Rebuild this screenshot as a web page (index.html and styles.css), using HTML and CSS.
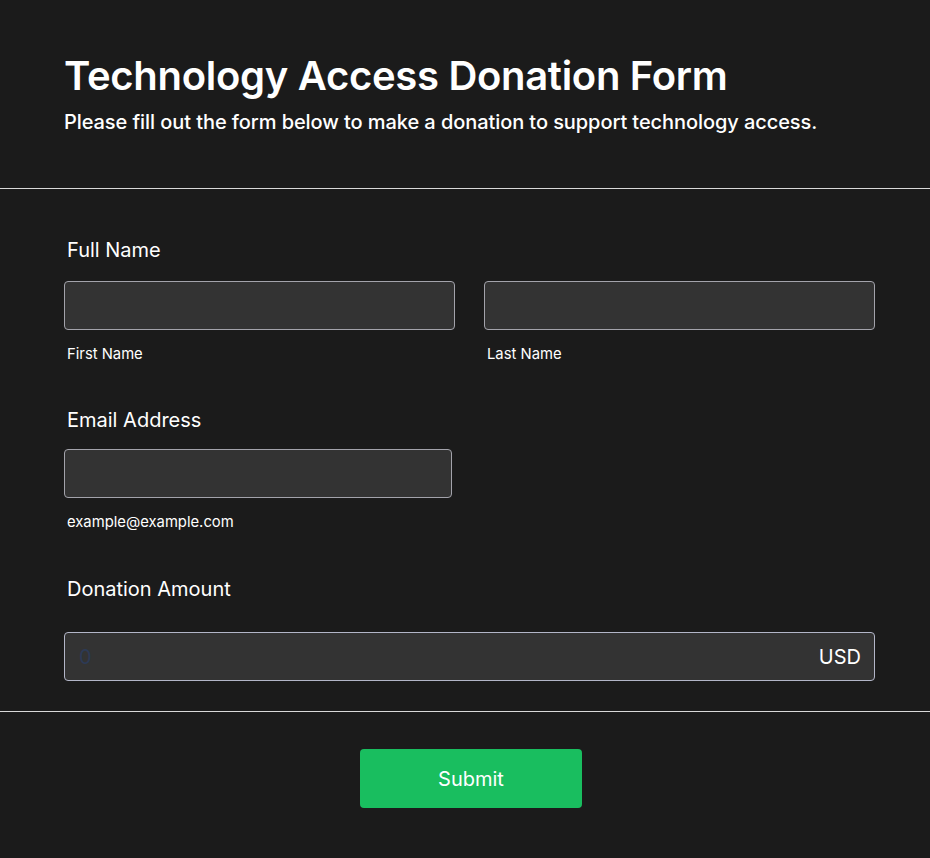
FILE: index.html
```html
<!DOCTYPE html>
<html lang="en">
<head>
<meta charset="utf-8">
<title>Technology Access Donation Form</title>
<link rel="stylesheet" href="styles.css">
</head>
<body>
<form class="form">
  <header class="header">
    <h1 class="title">Technology Access Donation Form</h1>
    <p class="subtitle">Please fill out the form below to make a donation to support technology access.</p>
  </header>
  <section class="fields">
    <div class="field field-name">
      <label class="label">Full Name</label>
      <div class="row">
        <div class="col">
          <input class="input" type="text">
          <span class="sublabel">First Name</span>
        </div>
        <div class="col">
          <input class="input" type="text">
          <span class="sublabel">Last Name</span>
        </div>
      </div>
    </div>
    <div class="field field-email">
      <label class="label">Email Address</label>
      <input class="input input-email" type="email">
      <span class="sublabel">example@example.com</span>
    </div>
    <div class="field field-amount">
      <label class="label">Donation Amount</label>
      <div class="amount">
        <span class="amount-value">0</span>
        <span class="amount-currency">USD</span>
      </div>
    </div>
  </section>
  <footer class="footer">
    <button class="submit" type="button">Submit</button>
  </footer>
</form>
</body>
</html>
```
FILE: styles.css
```css
* { box-sizing: border-box; }
html, body { margin: 0; padding: 0; }
body {
  background: #1b1b1b;
  color: #ffffff;
  font-family: Inter, "Noto Sans", "Liberation Sans", sans-serif;
  width: 930px;
  height: 858px;
  overflow: hidden;
}
.form { display: flex; flex-direction: column; }
.header {
  padding: 52px 64px 54px;
  border-bottom: 1px solid #d9d9d9;
}
.title {
  margin: 0;
  font-size: 40px;
  line-height: 48px;
  font-weight: 600;
  letter-spacing: -0.3px;
}
.subtitle {
  margin: 10px 0 0;
  font-size: 20px;
  line-height: 24px;
  font-weight: 500;
  letter-spacing: -0.075px;
}
.fields {
  padding: 49px 55px 30px 64px;
  border-bottom: 1px solid #d9d9d9;
  display: flex;
  flex-direction: column;
}
.field { display: flex; flex-direction: column; }
.label {
  font-size: 20px;
  line-height: 24px;
  font-weight: 400;
  padding-left: 3px;
}
.row { display: flex; gap: 29px; margin-top: 19px; }
.col { flex: 1; display: flex; flex-direction: column; }
.input {
  height: 49px;
  background: #333333;
  border: 1px solid #a3a3ab;
  border-radius: 4px;
  color: #fff;
  font: inherit;
  font-size: 20px;
  padding: 0 14px;
  width: 100%;
}
.sublabel {
  font-size: 14.8px;
  line-height: 18px;
  margin-top: 15px;
  padding-left: 3px;
}
.field-email { margin-top: 45px; }
.field-email .input { margin-top: 17px; width: 388px; }
.field-amount { margin-top: 46px; }
.amount {
  margin-top: 31px;
  height: 49px;
  background: #333333;
  border: 1px solid #b3b6c8;
  border-radius: 4px;
  display: flex;
  align-items: center;
  justify-content: space-between;
  padding: 0 13px 0 14px;
  font-size: 20px;
}
.amount-value { color: #2c3a56; }
.amount-currency { color: #ffffff; }
.footer {
  display: flex;
  justify-content: center;
  padding: 37px 52px 0 64px;
}
.submit {
  width: 222px;
  height: 59px;
  background: #19be5f;
  border: none;
  border-radius: 4px;
  color: #ffffff;
  font: inherit;
  font-size: 20px;
  font-weight: 400;
}
```
